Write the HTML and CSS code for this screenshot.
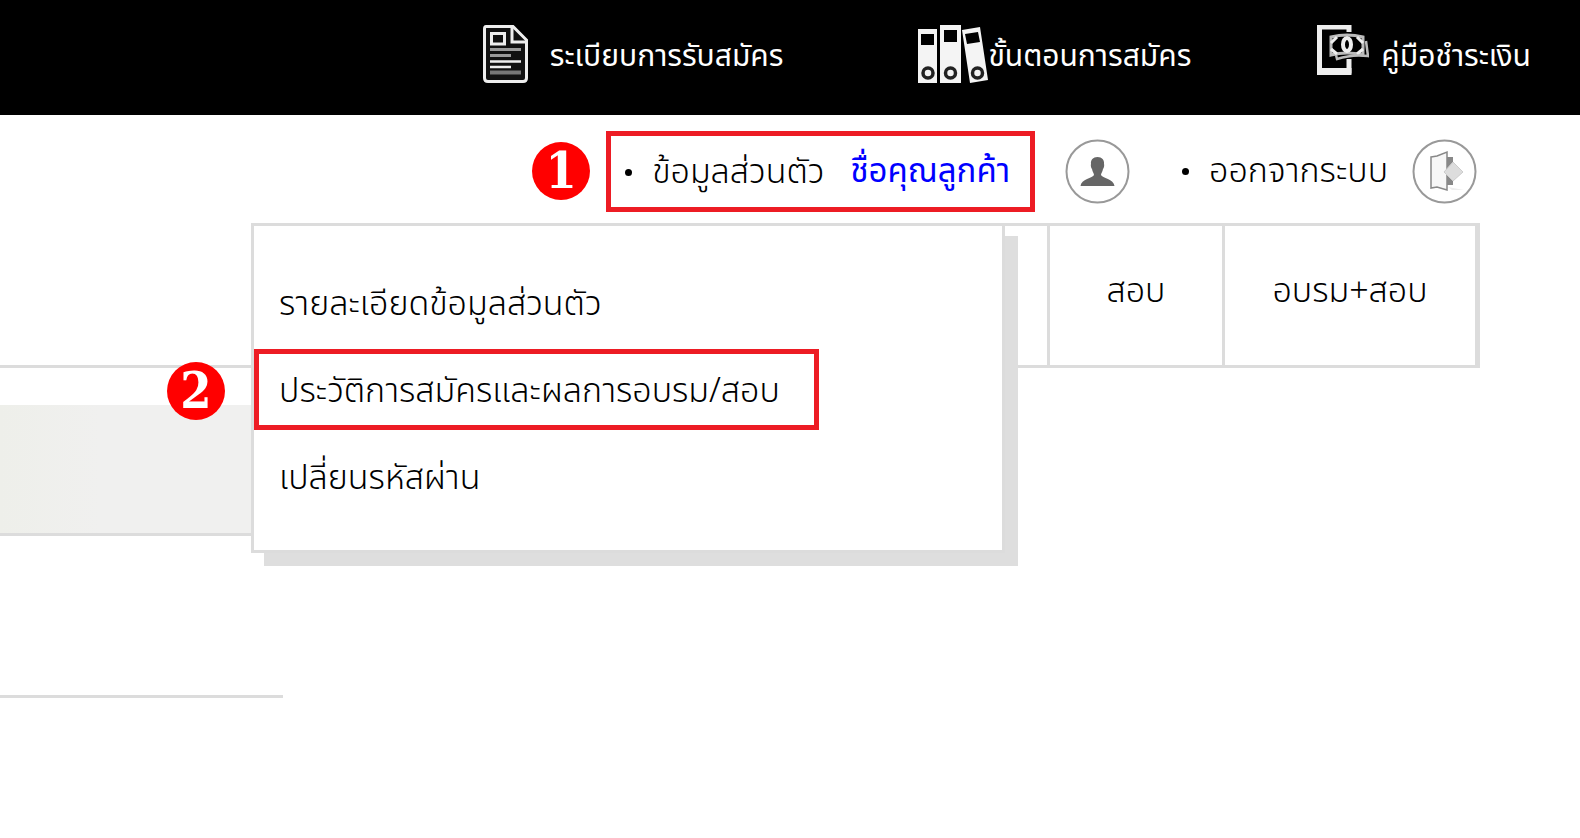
FILE: index.html
```html
<!DOCTYPE html>
<html lang="th">
<head>
    <meta charset="UTF-8">
    <meta name="viewport" content="width=device-width, initial-scale=1.0">
    <title>ข้อมูลส่วนตัว</title>
    <link rel="stylesheet" href="styles.css">
</head>
<body>
    <header class="topbar">
        <a href="#" class="top-link top-rules">
            <svg width="45" height="58" viewBox="0 0 45 58" fill="none" stroke="#eee">
                <path d="M3 1.500H30L43.500 15V53Q43.500 56.500 40 56.500H5Q1.500 56.500 1.500 53V4Q1.500 1.500 3 1.500Z" fill="#111" stroke-width="3"/>
                <path d="M29 2V17H43" stroke-width="3"/>
                <path d="M8.500 8.500H21.500V19H8.500Z" stroke-width="3"/>
                <path d="M7 24.500H38M7 30.500H28" stroke="#999" stroke-width="3"/>
                <path d="M7 36.500H38M7 42H28" stroke-width="2.500"/>
                <path d="M7 47.500H38" stroke="#777" stroke-width="4"/>
            </svg>
            <span>ระเบียบการรับสมัคร</span>
        </a>
        <a href="#" class="top-link top-steps">
            <svg width="70" height="58" viewBox="0 0 70 58">
                <g fill="#f4f4f4">
                    <path d="M0 4H19V58H0ZM22 0H43V58H22ZM44 5L62 2L70 55L52 58Z"/>
                </g>
                <path d="M3 9H16V20H3ZM26 5H39V17H26ZM47 9L60 7L62 17L49 19Z" fill="#000"/>
                <g fill="none" stroke="#222" stroke-width="3.500">
                    <circle cx="10" cy="48" r="5"/>
                    <circle cx="32.500" cy="48" r="5"/>
                    <circle cx="59.500" cy="48" r="5"/>
                </g>
            </svg>
            <span>ขั้นตอนการสมัคร</span>
        </a>
        <a href="#" class="top-link top-payment">
            <svg width="52" height="58" viewBox="0 0 52 58" fill="none" stroke="#eee">
                <path d="M32 7V2H2.500V46H32V34" stroke-width="5"/>
                <path d="M0 46.500H34.500" stroke-width="7"/>
                <path d="M14 12Q30 8 46 12V30Q30 26 14 30Z" fill="#000" stroke="#bbb" stroke-width="3"/>
                <path d="M14 18L20 12M14 24L20 29M46 18L40 12M46 24L40 29" stroke-width="3"/>
                <ellipse cx="30" cy="19.500" rx="4" ry="6.500" stroke-width="4"/>
                <path d="M49 16L51 31Q35 29 20 34L19 30" stroke="#bbb" stroke-width="2.500"/>
            </svg>
            <span>คู่มือชำระเงิน</span>
        </a>
    </header>

    <div class="userbar">
        <span class="step">1</span>
        <a href="#" class="profile highlight">
            <span class="dot"></span>
            <span>ข้อมูลส่วนตัว</span>
            <span class="customer">ชื่อคุณลูกค้า</span>
        </a>
        <svg class="user-icon" width="65" height="65" viewBox="0 0 65 65">
            <circle cx="32.500" cy="32.500" r="31" fill="#fff" stroke="#999" stroke-width="2"/>
            <path d="M32.500 18C28 18 25.500 21 26 25C25.500 26 26 29 27 30C27.500 33 29 34 29 36C28 39 16 40 15.500 47H49.500C49 40 37 39 36 36C36 34 37.500 33 38 30C39 29 39.500 26 39 25C39.500 21 37 18 32.500 18Z" fill="#666"/>
        </svg>
        <a href="#" class="logout">
            <span class="dot"></span>
            <span>ออกจากระบบ</span>
            <svg width="65" height="65" viewBox="0 0 65 65">
                <circle cx="32.500" cy="32.500" r="31" fill="#fff" stroke="#999" stroke-width="2"/>
                <path d="M34 18H41V46H34Z" fill="#888"/>
                <path d="M36 48L52 51H40Z" fill="#eee"/>
                <path d="M19 18L25 17L35 13V51L25 48L19 49Z" fill="#f7f7f7" stroke="#888" stroke-width="1.500"/>
                <path d="M32 33L41 23L51 33L41 42Z" fill="#ddd" stroke="#ccc"/>
            </svg>
        </a>
    </div>

    <div class="content">
        <nav class="tabs">
            <a href="#" class="tab tab-exam">สอบ</a>
            <a href="#" class="tab tab-both">อบรม+สอบ</a>
        </nav>
        <div class="banner"></div>
        <hr class="divider">

        <ul class="menu">
            <li><a href="#">รายละเอียดข้อมูลส่วนตัว</a></li>
            <li>
                <span class="step">2</span>
                <a href="#" class="highlight">ประวัติการสมัครและผลการอบรม/สอบ</a>
            </li>
            <li><a href="#">เปลี่ยนรหัสผ่าน</a></li>
        </ul>
    </div>
</body>
</html>
```

FILE: styles.css
```css
* {
    box-sizing: border-box;
}
body {
    margin: 0;
    background-color: #fff;
    color: #000;
    font-family: "Noto Sans Thai", Lato, sans-serif;
    font-size: 34px;
    font-weight: 300;
}
a {
    color: inherit;
    text-decoration: none;
    white-space: nowrap;
}
svg {
    display: block;
    flex: none;
}
.topbar {
    display: flex;
    justify-content: flex-end;
    height: 115px;
    padding: 25px 49px 0 0;
    background-color: #000;
    color: #fff;
    font-size: 30px;
    font-weight: 400;
    line-height: 64px;
}
.top-link {
    display: flex;
}
.top-rules {
    gap: 22px;
}
.top-steps {
    margin-left: 135px;
}
.top-payment {
    gap: 12px;
    margin-left: 126px;
}
.userbar {
    display: flex;
    justify-content: flex-end;
    align-items: center;
    height: 108px;
    padding: 8px 103px 4px 0;
}
.step {
    width: 58px;
    height: 58px;
    border-radius: 50%;
    background-color: #f00;
    color: #fff;
    font-family: "DejaVu Serif Condensed", "DejaVu Serif", serif;
    font-size: 50px;
    font-weight: bold;
    line-height: 58px;
    text-align: center;
}
.dot {
    width: 7px;
    height: 7px;
    border-radius: 50%;
    background-color: #000;
}
.profile {
    display: flex;
    align-items: center;
    height: 81px;
    margin: 0 30px 0 16px;
    padding: 2px 20px 0 14px;
}
.profile .dot,
.logout .dot {
    margin-right: 20px;
}
.highlight {
    border: 5px solid #ed1c24;
}
.customer {
    margin-left: 26px;
    color: #00f;
    font-size: 33px;
    font-weight: 400;
}
.logout {
    display: flex;
    align-items: center;
    margin-left: 52px;
}
.logout svg {
    margin-left: 24px;
}
.content {
    position: relative;
}
.tabs {
    display: flex;
    justify-content: flex-end;
    height: 145px;
    margin-right: 100px;
    border-right: 5px solid #dcdcdc;
    border-bottom: 3px solid #dcdcdc;
}
.tabs::before {
    content: "";
    width: 175px;
    border-top: 3px solid #dcdcdc;
}
.tab {
    padding-top: 36px;
    border-top: 3px solid #dcdcdc;
    border-left: 3px solid #dcdcdc;
    line-height: 60px;
    text-align: center;
}
.tab-exam {
    width: 175px;
}
.tab-both {
    width: 253px;
}
.banner {
    width: 283px;
    height: 131px;
    margin-top: 37px;
    border-bottom: 3px solid #dcdcdc;
    background: linear-gradient(to right, #eeefea, #f0f0ef 100px);
}
.divider {
    width: 283px;
    height: 3px;
    margin: 159px 0 0;
    border: 0;
    background-color: #dcdcdc;
}
/* dropdown under the profile link */
.menu {
    position: absolute;
    top: 0;
    left: 251px;
    width: 754px;
    margin: 0;
    padding: 36px 0 33px;
    border: 3px solid #dcdcdc;
    background-color: #fff;
    box-shadow: 13px 13px 0 #dedede;
    list-style: none;
}
.menu li {
    position: relative;
    display: flex;
    margin-bottom: 6px;
}
.menu li:last-child {
    margin-bottom: 0;
}
.menu a {
    padding: 4px 34px 0 20px;
    border: 5px solid transparent;
    line-height: 67px;
}
.menu .highlight {
    border-color: #ed1c24;
}
.menu .step {
    position: absolute;
    top: 13px;
    left: -87px;
}
```
